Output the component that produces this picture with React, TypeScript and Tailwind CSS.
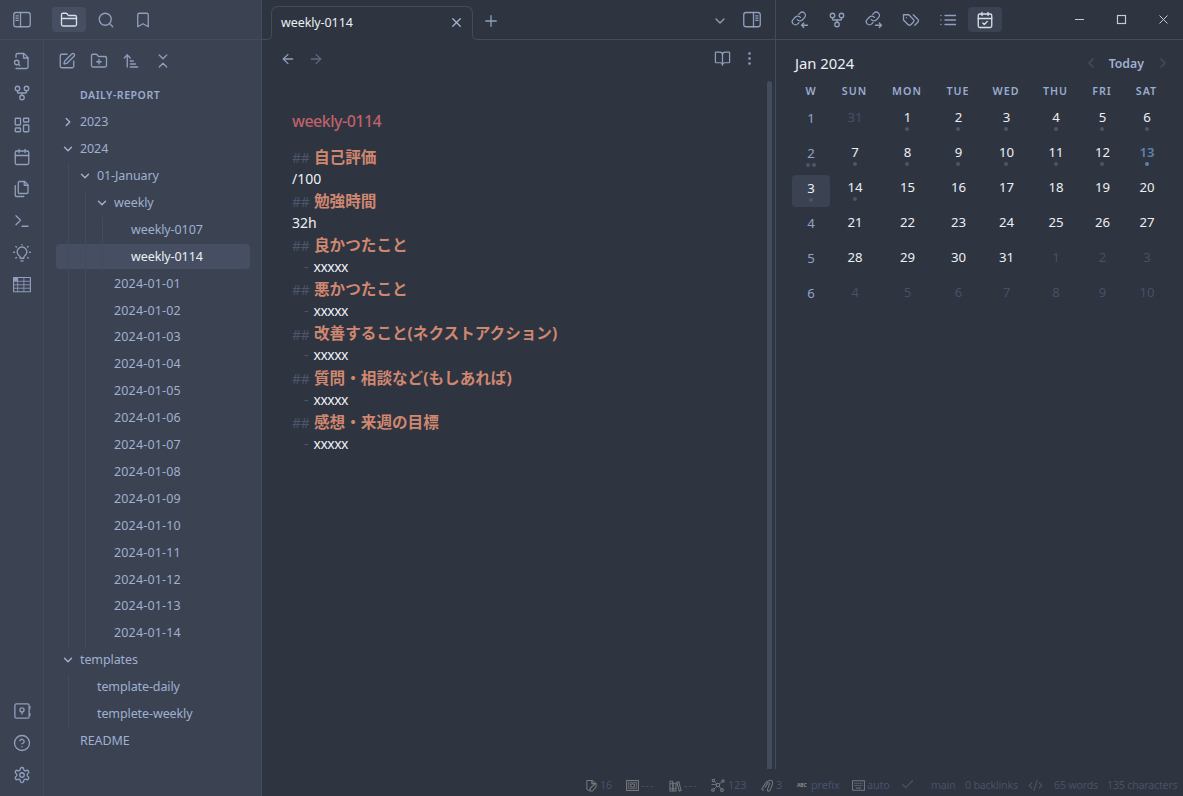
import type { ReactNode } from 'react';
import { clsx } from 'clsx';
import {
  ArrowLeft,
  ArrowRight,
  ArrowUpNarrowWide,
  BookOpen,
  Check,
  ChevronDown,
  ChevronLeft,
  ChevronRight,
  ChevronsDownUp,
  CircleHelp,
  EllipsisVertical,
  FolderClosed,
  FolderPlus,
  GitFork,
  LayoutDashboard,
  Plus,
  Search,
  Bookmark,
  SquarePen,
  X,
} from 'lucide-react';

interface GlyphProps {
  children: ReactNode;
  className?: string;
  stroke?: number;
}

function Glyph({ children, className = 'size-[18px]', stroke = 1.75 }: GlyphProps) {
  return (
    <svg viewBox="0 0 24 24" fill="none" stroke="currentColor" strokeWidth={stroke} strokeLinecap="round" strokeLinejoin="round" className={clsx('shrink-0', className)}>
      {children}
    </svg>
  );
}

const SidebarLeft = () => (
  <Glyph>
    <rect x="1" y="2" width="22" height="19" rx="3" />
    <path d="M10 2v19M4 6.5h3M4 9.5h3M4 12.5h3" />
  </Glyph>
);

const SidebarRight = () => (
  <Glyph>
    <rect x="1" y="2" width="22" height="19" rx="3" />
    <path d="M14 2v19M17 6.5h3M17 9.5h3M17 12.5h3" />
  </Glyph>
);

const FileSearch = () => (
  <Glyph>
    <path d="M4 22h14a2 2 0 0 0 2-2V7.5L14.5 2H6a2 2 0 0 0-2 2v3" />
    <path d="M14 2v6h6" />
    <circle cx="5" cy="14" r="3" />
    <path d="m9 18-1.5-1.5" />
  </Glyph>
);

const CalendarIcon = ({ checked = false }: { checked?: boolean }) => (
  <Glyph>
    <rect x="3" y="4" width="18" height="18" rx="2" />
    <path d="M16 2v4M8 2v4M3 10h18" />
    {checked && <path d="m9 16 2 2 4-4" />}
  </Glyph>
);

const FilesIcon = () => (
  <Glyph>
    <path d="M15.5 2H8.6A1.6 1.6 0 0 0 7 3.6v12.8A1.6 1.6 0 0 0 8.6 18h9.8a1.6 1.6 0 0 0 1.6-1.6V6.5L15.5 2z" />
    <path d="M3 7.6v12.8A1.6 1.6 0 0 0 4.6 22h9.8M15 2v5h5" />
  </Glyph>
);

const TerminalIcon = () => (
  <Glyph>
    <path d="m4 17 6-6-6-6M12 19h8" />
  </Glyph>
);

const BulbIcon = () => (
  <Glyph>
    <path d="M9.5 19v-1.500c0-1.500-4-3-4-7a6.500 6.500 0 0 1 13 0c0 4-4 5.500-4 7V19zM10.500 22.500h3" />
    <path d="M12 .8v.4M3.800 3.300l.7.700M20.200 3.300l-.7.700M.8 11h1.200M22 11h1.200M3.800 18.700l.7-.7M20.200 18.700l-.7-.7" />
  </Glyph>
);

const TableIcon = () => (
  <Glyph stroke={1.1}>
    <path d="M.8 2h22.400v19H.8z" strokeWidth="1.500" />
    <path d="M1 7h22M1 11.700h22M1 16.300h22M6.200 2v19M14.500 2v19" />
    <path d="M1 2h5v4.500H1z" fill="currentColor" />
  </Glyph>
);

const VaultIcon = () => (
  <Glyph>
    <rect x="2.500" y="2.500" width="19" height="19" rx="2" />
    <circle cx="12" cy="10.500" r="2.700" />
    <path d="M12 13.500V16M22.500 6v2.500M22.500 15.500V18" />
  </Glyph>
);

const SettingsIcon = () => (
  <Glyph>
    <path d="M12.220 2h-.44a2 2 0 0 0-2 2v.18a2 2 0 0 1-1 1.730l-.43.25a2 2 0 0 1-2 0l-.15-.08a2 2 0 0 0-2.730.73l-.22.38a2 2 0 0 0 .73 2.730l.15.1a2 2 0 0 1 1 1.720v.51a2 2 0 0 1-1 1.740l-.15.09a2 2 0 0 0-.73 2.730l.22.38a2 2 0 0 0 2.730.73l.15-.08a2 2 0 0 1 2 0l.43.25a2 2 0 0 1 1 1.730V20a2 2 0 0 0 2 2h.44a2 2 0 0 0 2-2v-.18a2 2 0 0 1 1-1.730l.43-.25a2 2 0 0 1 2 0l.15.08a2 2 0 0 0 2.730-.73l.22-.39a2 2 0 0 0-.73-2.730l-.15-.08a2 2 0 0 1-1-1.740v-.5a2 2 0 0 1 1-1.740l.15-.09a2 2 0 0 0 .73-2.730l-.22-.38a2 2 0 0 0-2.730-.73l-.15.08a2 2 0 0 1-2 0l-.43-.25a2 2 0 0 1-1-1.730V4a2 2 0 0 0-2-2z" />
    <circle cx="12" cy="12" r="3" />
  </Glyph>
);

const LinkArrow = ({ out = false }: { out?: boolean }) => (
  <Glyph>
    <path d="M8.500 11.500a4.300 4.300 0 0 0 6.500.5l3-3.200a4.200 4.200 0 0 0-6-6l-1.700 1.700" />
    <path d="M12.500 8.500a4.300 4.300 0 0 0-6.500-.5l-3 3.200a4.200 4.200 0 0 0 6 6l1.500-1.500" />
    {out ? <path d="M14 19h8M19 16l3 3-3 3" /> : <path d="M22 19h-8M17 16l-3 3 3 3" />}
  </Glyph>
);

const TagsIcon = () => (
  <Glyph>
    <path d="M9 5H2v7l6.290 6.290c.94.94 2.480.94 3.420 0l3.580-3.580c.94-.94.94-2.480 0-3.420L9 5Z" />
    <path d="M6 9.010V9M15 5l6.300 6.300a2.400 2.400 0 0 1 0 3.400L17 19" />
  </Glyph>
);

const ListIcon = () => (
  <Glyph>
    <path d="M8 6h14M8 12h14M8 18h14M2.500 6h.01M2.500 12h.01M2.500 18h.01" />
  </Glyph>
);

interface TreeItem {
  label: string;
  depth: number;
  folder?: 'open' | 'closed';
  active?: boolean;
  date?: boolean;
}

const DAYS = ['01', '02', '03', '04', '05', '06', '07', '08', '09', '10', '11', '12', '13', '14'];

const TREE: TreeItem[] = [
  { label: '2023', depth: 0, folder: 'closed' },
  { label: '2024', depth: 0, folder: 'open' },
  { label: '01-January', depth: 1, folder: 'open' },
  { label: 'weekly', depth: 2, folder: 'open' },
  { label: 'weekly-0107', depth: 3 },
  { label: 'weekly-0114', depth: 3, active: true },
  ...DAYS.map((d) => ({ label: `2024-01-${d}`, depth: 2, date: true })),
  { label: 'templates', depth: 0, folder: 'open' },
  { label: 'template-daily', depth: 1 },
  { label: 'templete-weekly', depth: 1 },
  { label: 'README', depth: 0 },
];

const NOTE = [
  { heading: '自己評価', body: '/100' },
  { heading: '勉強時間', body: '32h' },
  { heading: '良かつたこと', body: 'xxxxx', bullet: true },
  { heading: '悪かつたこと', body: 'xxxxx', bullet: true },
  { heading: '改善すること(ネクストアクション)', body: 'xxxxx', bullet: true },
  { heading: '質問・相談など(もしあれば)', body: 'xxxxx', bullet: true },
  { heading: '感想・来週の目標', body: 'xxxxx', bullet: true },
];

const WEEKDAYS = ['W', 'SUN', 'MON', 'TUE', 'WED', 'THU', 'FRI', 'SAT'];
const CAL_GRID = 'grid grid-cols-[38px_49px_56px_46px_50px_49px_44px_45px]';

// Day offsets from Jan 1; 31 Dec sits in the first cell
const WEEKS = [0, 1, 2, 3, 4, 5].map((w) => [0, 1, 2, 3, 4, 5, 6].map((d) => w * 7 + d));
const WEEK_NOTES = [0, 2, 1, 0, 0, 0];
const TODAY = 13;

function IconTab({ children, active }: { children: ReactNode; active?: boolean }) {
  return (
    <button type="button" className={clsx('flex h-[25px] w-[34px] shrink-0 items-center justify-center rounded', active && 'bg-[#464f62] text-[#d8dee9]')}>
      {children}
    </button>
  );
}

function Ribbon() {
  return (
    <div className="flex w-11 shrink-0 flex-col items-center gap-[14px] border-r border-[#434c5e] pt-3 pb-3">
      <FileSearch />
      <GitFork size={18} strokeWidth={1.75} />
      <LayoutDashboard size={18} strokeWidth={1.75} />
      <CalendarIcon />
      <FilesIcon />
      <TerminalIcon />
      <BulbIcon />
      <TableIcon />
      <div className="grow" />
      <VaultIcon />
      <CircleHelp size={18} strokeWidth={1.75} />
      <SettingsIcon />
    </div>
  );
}

function TreeRow({ label, depth, folder, active, date }: TreeItem) {
  return (
    <div className={clsx('mb-[2px] flex h-[24.910px] items-center rounded pl-3', active && 'bg-[#464f62] text-[#eceff4]')}>
      {Array.from({ length: depth }, (_, i) => (
        <span key={i} className="-mb-[2px] h-[26.910px] w-[17px] shrink-0 border-l border-[#434c5e]" />
      ))}
      <span className="w-3 shrink-0">
        {folder === 'open' && <ChevronDown size={14} strokeWidth={2.500} className="-ml-[7px]" />}
        {folder === 'closed' && <ChevronRight size={14} strokeWidth={2.500} className="-ml-[7px]" />}
      </span>
      <span className={clsx('pt-[1.200px] whitespace-nowrap', date ? 'tracking-[0.15px]' : 'tracking-[-0.1px]')}>{label}</span>
    </div>
  );
}

function LeftSidebar() {
  return (
    <aside className="flex w-[262px] shrink-0 flex-col border-r border-[#434c5e] bg-[#3b4252] text-[#8f9fbd]">
      <div className="flex h-10 shrink-0 items-center border-b border-[#434c5e] pl-[13px]">
        <SidebarLeft />
        <div className="ml-[21px] flex gap-[3px]">
          <IconTab active>
            <FolderClosed size={18} strokeWidth={1.75} />
          </IconTab>
          <IconTab>
            <Search size={18} strokeWidth={1.75} />
          </IconTab>
          <IconTab>
            <Bookmark size={18} strokeWidth={1.75} />
          </IconTab>
        </div>
      </div>
      <div className="flex min-h-0 grow">
        <Ribbon />
        <div className="grow pr-[11px] pl-3">
          <div className="flex gap-[14px] pt-3 pl-[2px]">
            <SquarePen size={18} strokeWidth={1.75} />
            <FolderPlus size={18} strokeWidth={1.75} />
            <ArrowUpNarrowWide size={18} strokeWidth={1.75} />
            <ChevronsDownUp size={18} strokeWidth={1.75} />
          </div>
          <div className="mt-[17px] mb-[5.500px] h-[17px] pl-6 text-[10.600px] leading-[17px] font-semibold tracking-[0.5px] text-[#9aacce]">DAILY-REPORT</div>
          <div className="text-[12.500px] text-[#9fb0d0]">
            {TREE.map((item) => (
              <TreeRow key={item.label} {...item} />
            ))}
          </div>
        </div>
      </div>
    </aside>
  );
}

function TabBar() {
  return (
    <div className="flex h-10 shrink-0">
      <span className="w-[5px] border-b border-[#434c5e]" />
      <span className="-mr-px size-[5px] self-end rounded-br-[5px] border-r border-b border-[#434c5e]" />
      <div className="mt-[6px] flex h-[29px] w-[202px] items-center justify-between rounded-t-[7px] border-x border-t border-[#434c5e] pt-[3px] pr-[8.500px] pl-[9px] text-[12.500px] tracking-[-0.1px] text-[#eceff4]">
        <span className="pt-px">weekly-0114</span>
        <X size={15} strokeWidth={2} className="text-[#a9b6cf]" />
      </div>
      <span className="-ml-px size-[5px] self-end rounded-bl-[5px] border-b border-l border-[#434c5e]" />
      <div className="flex grow items-center border-b border-[#434c5e] pt-[2px] pr-[14px] pl-[5px]">
        <Plus size={18} strokeWidth={1.75} />
        <div className="grow" />
        <ChevronDown size={16} strokeWidth={2} className="mr-[15px]" />
        <span className="-mt-[2px]">
          <SidebarRight />
        </span>
      </div>
    </div>
  );
}

function Editor() {
  return (
    <div className="flex min-h-0 grow flex-col">
      <div className="flex h-[41px] shrink-0 items-center pr-[17.500px] pb-[4px] pl-[18px]">
        <ArrowLeft size={16} strokeWidth={1.900} />
        <ArrowRight size={16} strokeWidth={1.900} className="ml-3 opacity-50" />
        <div className="grow" />
        <BookOpen size={17} strokeWidth={1.750} />
        <EllipsisVertical size={17} strokeWidth={1.750} className="ml-[10px]" />
      </div>
      <div className="flex min-h-0 grow">
        <div className="grow pt-[28px] pl-[30px] text-[14px] text-[#eceff4]">
          <h1 className="mb-[13px] h-6 text-[16px] leading-6 font-medium tracking-[-0.500px] text-[#bf616a]">weekly-0114</h1>
          {NOTE.map(({ heading, body, bullet }) => (
            <section key={heading} className="tracking-[-0.5px]">
              <h2 className="flex h-[22.500px] items-center whitespace-nowrap">
                <span className="w-[22px] tracking-[-0.2px] text-[#4c566a]">##</span>
                <span className="text-[15.600px] font-bold tracking-normal text-[#d08770]">{heading}</span>
              </h2>
              <p className={clsx('flex h-[21.700px] items-center pb-[2.500px]', !bullet && 'tracking-normal')}>
                {bullet && <span className="w-[21.500px] pl-3 text-[#4c566a]">-</span>}
                {body}
              </p>
            </section>
          ))}
        </div>
        <div className="mr-[3px] w-[5px] rounded-t bg-[#434c5e]" />
      </div>
    </div>
  );
}

function Dots({ count, blue }: { count: number; blue?: boolean }) {
  return (
    <span className="flex h-1 justify-center gap-[2px]">
      {Array.from({ length: count }, (_, i) => (
        <span key={i} className={clsx('size-1 rounded-full', blue ? 'bg-[#5e81ac]' : 'bg-[#4c566a]')} />
      ))}
    </span>
  );
}

function DayCell({ offset }: { offset: number }) {
  const outside = offset < 1 || offset > 31;
  const day = offset < 1 ? 31 : offset > 31 ? offset - 31 : offset;
  const today = offset === TODAY;
  return (
    <div className={clsx('flex flex-col items-center pt-[3px]', outside ? 'text-[#475066]' : today ? 'text-[#5e81ac]' : 'text-[#eceff4]', today && 'font-semibold')}>
      <span className="mb-px h-[18px] pl-px leading-[18px]">{day}</span>
      <Dots count={offset >= 1 && offset <= 14 ? 1 : 0} blue={today} />
    </div>
  );
}

function Calendar() {
  return (
    <div className="pt-[13px] pl-4">
      <div className="flex h-5 items-center pr-3 text-[#9fb0d0]">
        <span className="pl-[3px] text-[14.800px] text-[#eceff4]">Jan 2024</span>
        <div className="grow" />
        <ChevronLeft size={16} strokeWidth={2.500} className="text-[#434c5e]" />
        <span className="mr-[11px] ml-[10px] pt-[2px] text-[12.300px] font-semibold">Today</span>
        <ChevronRight size={16} strokeWidth={2.500} className="text-[#434c5e]" />
      </div>
      <div className={clsx(CAL_GRID, 'mt-2 h-5 items-center pt-px text-center text-[10.700px] font-semibold tracking-[1px] text-[#9aacce]')}>
        {WEEKDAYS.map((d) => (
          <span key={d}>{d}</span>
        ))}
      </div>
      <div className="mt-[4px] flex flex-col gap-[3px] text-[13.200px]">
        {WEEKS.map((week, w) => (
          <div key={w} className={clsx(CAL_GRID, 'h-8')}>
            <div className={clsx('rounded pt-[4px] text-center', w === 2 ? 'bg-[#3b4252] text-[#eceff4]' : 'text-[#8fa4cb]')}>
              <span className="mb-px block h-[18px] leading-[18px]">{w + 1}</span>
              <Dots count={WEEK_NOTES[w]} />
            </div>
            {week.map((offset) => (
              <DayCell key={offset} offset={offset} />
            ))}
          </div>
        ))}
      </div>
    </div>
  );
}

function WindowControls() {
  return (
    <div className="flex items-center gap-[31px] text-[#c3c9d5]">
      <svg viewBox="0 0 11 11" className="size-[11px]" fill="none" stroke="currentColor">
        <path d="M1 5.500h9" />
      </svg>
      <svg viewBox="0 0 11 11" className="size-[11px]" fill="none" stroke="currentColor">
        <rect x="1.500" y="1.500" width="8" height="8" strokeWidth="1.200" />
      </svg>
      <svg viewBox="0 0 11 11" className="size-[11px]" fill="none" stroke="currentColor">
        <path d="m1.500 1.500 8 8M9.500 1.500l-8 8" />
      </svg>
    </div>
  );
}

function RightSidebar() {
  return (
    <aside className="flex w-[408px] shrink-0 flex-col border-l border-[#434c5e]">
      <div className="flex h-10 shrink-0 items-center justify-between border-b border-[#434c5e] pr-[14px] pl-[7px]">
        <div className="flex gap-[3px]">
          <IconTab>
            <LinkArrow />
          </IconTab>
          <IconTab>
            <GitFork size={18} strokeWidth={1.750} />
          </IconTab>
          <IconTab>
            <LinkArrow out />
          </IconTab>
          <IconTab>
            <TagsIcon />
          </IconTab>
          <IconTab>
            <ListIcon />
          </IconTab>
          <button type="button" className="flex h-[25px] w-[34px] items-center justify-center rounded bg-[#3b4252] text-[#d8dee9]">
            <CalendarIcon checked />
          </button>
        </div>
        <WindowControls />
      </div>
      <Calendar />
    </aside>
  );
}

function StatusIcon({ children, className = 'size-[13px]' }: { children: ReactNode; className?: string }) {
  return (
    <svg viewBox="0 0 14 14" fill="none" stroke="currentColor" strokeWidth="1.100" className={clsx('shrink-0 text-[#75777c]', className)}>
      {children}
    </svg>
  );
}

function StatusBar() {
  return (
    <footer className="flex h-[27px] shrink-0 items-center pt-[6px] pl-[323px] text-[10.900px] tracking-[-0.15px] whitespace-nowrap text-[#46526f]">
      <div className="flex w-[41px] shrink-0 items-center gap-[2px]">
        <StatusIcon>
          <path d="M4 12.500 2 10.500v-9h5.500L12 5v3.500l-4 4.500H4.500" />
          <path d="M7.500 1.500V5H12M5 12.500l1-3L11 5.500" strokeWidth="1.400" />
        </StatusIcon>
        16
      </div>
      <div className="flex w-[43px] shrink-0 items-center gap-[2px]">
        <StatusIcon>
          <path d="M.6 1.500h12.800v11H.6z" />
          <path d="M2.500 3.500h9v7h-9z" strokeWidth=".8" />
          <circle cx="7" cy="7" r="2" />
          <path d="M4 5 5 6M10 5 9 6M4 9l1-1M10 9 9 8" />
        </StatusIcon>
        <span className="tracking-[1.100px]">---</span>
      </div>
      <div className="flex w-[42px] shrink-0 items-center gap-[2px]">
        <StatusIcon>
          <path d="M1 2.500h3v10.500H1zM4.500 4.500h3V13h-3zM8.500 3.500l2-.7 2.500 9.500-2 .7zM1 10.500h3M4.500 10.500h3M1 5h3" />
        </StatusIcon>
        <span className="tracking-[1.100px]">---</span>
      </div>
      <div className="flex w-[50px] shrink-0 items-center gap-[3px]">
        <StatusIcon className="size-[14px]">
          <circle cx="7" cy="7" r="1.700" />
          <circle cx="2.500" cy="2.500" r="1.300" />
          <circle cx="12" cy="3" r="1.100" />
          <circle cx="2" cy="12" r="1.300" />
          <circle cx="11" cy="12" r="1.400" />
          <path d="m3.500 3.500 2.300 2.300M8.300 6l2.700-2.200M5.800 8.200 3 11M8 8.300l2 2.500M.5 6.500h4.500" strokeWidth=".9" />
        </StatusIcon>
        123
      </div>
      <div className="flex w-[36px] shrink-0 items-center gap-[2px]">
        <StatusIcon>
          <path d="M3.500 11.500c-2 .8-3.300-.5-2-2L6 3c.8-1 2.300 0 1.500 1.200L4 9.500" />
          <path d="M8 2.500C9 .5 12.500 1 12.500 4c0 2-1 3-1.500 5s-2 4.500-3.500 4 0-3 .5-4.500L9.500 4" />
        </StatusIcon>
        3
      </div>
      <div className="flex w-[55px] shrink-0 items-center gap-[3px]">
        <span className="w-[11px] text-[5px] leading-none font-bold text-[#8a8c90]">ABC</span>
        prefix
      </div>
      <div className="flex w-[48px] shrink-0 items-center gap-[2px]">
        <StatusIcon>
          <path d="M2.500 4.500h9M2.500 7h9" strokeDasharray="1.300 .8" />
          <path d="M.6 2h12.800v10H.6zM4 9.800h6" />
        </StatusIcon>
        auto
      </div>
      <div className="flex items-center text-[10.700px] tracking-[-0.22px] text-[#485267]">
        <Check size={15} strokeWidth={2} className="mr-[16px] mb-[3px]" />
        <span className="w-[34px]">main</span>
        <span className="w-[63px]">0 backlinks</span>
        <Glyph className="mr-[11px] size-[15px]" stroke={2}>
          <path d="m18 16 4-4-4-4M6 8l-4 4 4 4M14.500 4l-5 16" />
        </Glyph>
        <span className="w-[53px]">65 words</span>
        <span>135 characters</span>
      </div>
    </footer>
  );
}

export default function App() {
  return (
    <div className="flex h-[796px] w-[1183px] overflow-hidden bg-[#2e3440] font-['Noto_Sans','Noto_Sans_CJK_JP',sans-serif] text-[#8f9fbd]">
      <LeftSidebar />
      <div className="flex min-w-0 grow flex-col">
        <div className="flex min-h-0 grow">
          <main className="flex min-w-0 grow flex-col">
            <TabBar />
            <Editor />
          </main>
          <RightSidebar />
        </div>
        <StatusBar />
      </div>
    </div>
  );
}
